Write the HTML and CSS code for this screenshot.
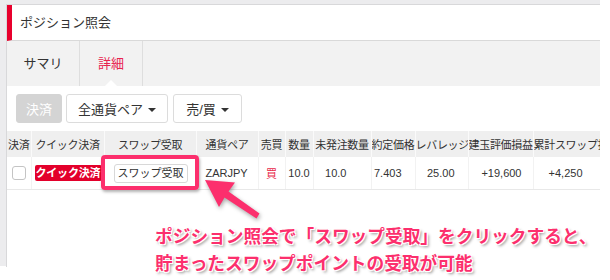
FILE: index.html
```html
<!DOCTYPE html>
<html lang="ja">
<head>
  <meta charset="UTF-8">
  <title>ポジション照会</title>
  <link rel="stylesheet" href="styles.css">
</head>
<body>
  <div class="page">
    <div class="panel">
      <div class="title">ポジション照会</div>
      <div class="tabs">
        <div class="tab">サマリ</div>
        <div class="tab active">詳細</div>
      </div>
      <div class="toolbar">
        <button class="btn disabled">決済</button>
        <button class="btn select">全通貨ペア<span class="caret"></span></button>
        <button class="btn select sides">売/買<span class="caret"></span></button>
      </div>
      <table class="positions">
        <colgroup>
          <col style="width:24px"><col style="width:73px"><col style="width:92px"><col style="width:62px">
          <col style="width:27px"><col style="width:28px"><col style="width:58px"><col style="width:44px">
          <col style="width:53px"><col style="width:65px"><col style="width:90px">
        </colgroup>
        <thead>
          <tr>
            <th>決済</th>
            <th>クイック決済</th>
            <th>スワップ受取</th>
            <th>通貨ペア</th>
            <th>売買</th>
            <th>数量</th>
            <th>未発注数量</th>
            <th>約定価格</th>
            <th>レバレッジ</th>
            <th>建玉評価損益</th>
            <th class="left">累計スワップ損益</th>
          </tr>
        </thead>
        <tbody>
          <tr>
            <td class="center"><span class="check"></span></td>
            <td class="quick-cell"><span class="quick">クイック決済</span></td>
            <td class="swap-cell"><span class="swap">スワップ受取</span></td>
            <td class="pair">ZARJPY</td>
            <td class="center buy">買</td>
            <td class="center">10.0</td>
            <td class="num pad-24">10.0</td>
            <td class="num pad-13">7.403</td>
            <td class="num pad-13">25.00</td>
            <td class="num pad-11">+19,600</td>
            <td class="num pad-40">+4,250</td>
          </tr>
        </tbody>
      </table>
    </div>
  </div>

  <!-- callout drawn over the screenshot -->
  <div class="highlight"></div>
  <svg class="arrow" width="610" height="280" viewBox="0 0 610 280">
    <polygon points="205,180 235,182.5 228.5,191.5 259.5,213.5 256.5,218.5 224.5,197.5 219,207" fill="#fc2f6d"/>
  </svg>
  <p class="note">ポジション照会で「スワップ受取」をクリックすると、<br>貯まったスワップポイントの受取が可能</p>
</body>
</html>
```

FILE: styles.css
```css
body {
  margin: 0;
  width: 610px;
  height: 280px;
  position: relative;
  overflow: hidden;
  background: #fff;
  font-family: "Liberation Sans", "Noto Sans CJK JP", sans-serif;
  color: #333;
}
.page {
  width: 600px;
  height: 266px;
  box-sizing: border-box;
  padding: 4px 0 0 6px;
  background: #ececee;
}
.panel {
  height: 100%;
  background: #fff;
  border-top: 1px solid #d8d8da;
  border-left: 1px solid #d8d8da;
  overflow: hidden;
}
.title {
  height: 35px;
  line-height: 35px;
  border-left: 5px solid #e8002d;
  border-bottom: 1px solid #d9d9d9;
  padding-left: 8px;
  font-size: 13px;
  color: #333;
}
.tabs {
  display: flex;
  height: 45px;
  background: #f2f2f2;
}
.tab {
  position: relative;
  width: 72px;
  line-height: 45px;
  text-align: center;
  font-size: 13px;
  border-right: 1px solid #dedede;
}
.tab.active {
  width: 62px;
  color: #e8224e;
}
.tab.active::after {
  content: "";
  position: absolute;
  left: 50%;
  bottom: 0;
  margin-left: -6px;
  border: 6px solid transparent;
  border-top: 0;
  border-bottom-color: #fff;
}
.toolbar {
  display: flex;
  gap: 4px;
  padding: 8px 0 0 9px;
}
.btn {
  height: 29px;
  box-sizing: border-box;
  border: 1px solid #dcdcdc;
  border-radius: 3px;
  background: #fff;
  font-family: inherit;
  font-size: 13px;
  color: #333;
  padding: 0;
}
.btn.disabled {
  width: 46px;
  background: #d4d4d4;
  border-color: #d4d4d4;
  color: #fff;
}
.btn.select {
  width: 102px;
}
.btn.sides {
  width: 69px;
  margin-left: 1px;
}
.caret {
  display: inline-block;
  vertical-align: middle;
  margin: -2px 0 0 5px;
  border: 4px solid transparent;
  border-bottom: 0;
  border-top-color: #333;
}
.positions {
  margin-top: 8px;
  table-layout: fixed;
  width: 616px;
  border-collapse: collapse;
}
.positions th {
  height: 26px;
  padding: 0;
  background: #efefef;
  border-right: 1px solid #fafafa;
  font-size: 11px;
  font-weight: normal;
  letter-spacing: -0.3px;
  white-space: nowrap;
  overflow: hidden;
  text-align: center;
}
.positions th.left {
  text-align: left;
}
.positions td {
  height: 32px;
  padding: 0;
  border-right: 1px solid #f2f2f2;
  border-bottom: 1px solid #e8e8e8;
  font-size: 11px;
  white-space: nowrap;
  overflow: hidden;
}
.center {
  text-align: center;
}
.num {
  text-align: right;
}
.pad-24 { padding-right: 24px !important; }
.pad-13 { padding-right: 13px !important; }
.pad-11 { padding-right: 11px !important; }
.pad-40 { padding-right: 40px !important; }
.check {
  display: inline-block;
  vertical-align: middle;
  width: 14px;
  height: 14px;
  box-sizing: border-box;
  border: 1px solid #c4c4c4;
  border-radius: 3px;
  background: #fff;
}
.quick-cell {
  padding-left: 3px !important;
}
.quick {
  display: inline-block;
  vertical-align: middle;
  width: 67px;
  height: 16px;
  line-height: 16px;
  overflow: hidden;
  border-radius: 2px;
  background: #e3002b;
  color: #fff;
  font-size: 11px;
  font-weight: bold;
  letter-spacing: -0.2px;
  text-indent: 1px;
}
.swap-cell {
  padding-left: 9px !important;
}
.swap {
  display: inline-block;
  vertical-align: middle;
  width: 74px;
  height: 19px;
  line-height: 17px;
  box-sizing: border-box;
  border: 1px solid #d8d8d8;
  border-radius: 3px;
  background: #fff;
  text-align: center;
  font-size: 11px;
}
.pair {
  padding-left: 9px !important;
}
.buy {
  color: #e8284a;
}
.highlight {
  position: absolute;
  left: 101px;
  top: 155px;
  width: 98px;
  height: 35px;
  box-sizing: border-box;
  border: 4px solid #fc2f6d;
  border-radius: 4px;
  box-shadow: 1px 2px 3px rgba(0, 0, 0, 0.3);
}
.arrow {
  position: absolute;
  left: 0;
  top: 0;
  filter: drop-shadow(1px 2px 2px rgba(0, 0, 0, 0.35));
}
.note {
  position: absolute;
  left: 155px;
  top: 222px;
  margin: 0;
  font-family: "Noto Sans CJK JP", sans-serif;
  font-size: 17.7px;
  font-weight: bold;
  line-height: 27px;
  white-space: nowrap;
  color: #fc2f6d;
  text-shadow: -1px -1px 0 #fff, 1px -1px 0 #fff, -1px 1px 0 #fff, 1px 1px 0 #fff, 2px 2px 3px rgba(0, 0, 0, 0.45);
}
```
